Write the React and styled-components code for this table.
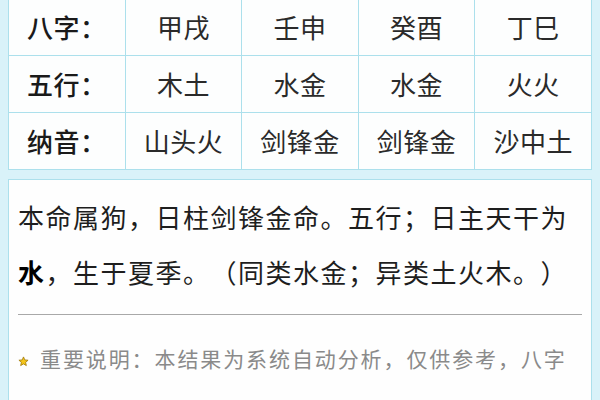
import React from 'react';
import styled, { createGlobalStyle } from 'styled-components';

const GlobalStyle = createGlobalStyle`
  html, body {
    margin: 0;
    padding: 0;
    background: #d9f2f9;
    font-family: "Noto Sans CJK SC", "Noto Sans", sans-serif;
  }
`;

const Page = styled.div`
  width: 600px;
  height: 400px;
  overflow: hidden;
  padding: 0 8px;
  box-sizing: border-box;
  background: #d9f2f9;
`;

const Table = styled.table`
  width: 584px;
  margin-top: -2px;
  border-collapse: collapse;
  table-layout: fixed;
  background: #fdfefe;
`;

const Cell = styled.td`
  height: 56px;
  padding: 0;
  border: 1px solid #ace0ec;
  text-align: center;
  font-size: 26px;
  letter-spacing: 0.5px;
  line-height: 56px;
  color: ${p => (p.label ? '#1a1a1a' : '#2a2a2a')};
  font-weight: ${p => (p.label ? 500 : 400)};
`;

const Card = styled.div`
  margin-top: 9px;
  background: #fefefe;
  border: 1px solid #ace0ec;
  padding: 9px 9px 0;
  height: 300px;
`;

const Summary = styled.p`
  margin: 0;
  font-size: 26px;
  letter-spacing: 1.5px;
  line-height: 55px;
  color: #1e1e1e;
  text-spacing-trim: space-all;

  b {
    font-weight: 700;
    color: #000;
  }
`;

const Divider = styled.hr`
  margin: 15px 0 0;
  border: none;
  border-top: 1px solid #a8a8a8;
`;

const Notice = styled.p`
  margin: 15px 0 0;
  font-size: 21px;
  letter-spacing: 1.9px;
  line-height: 56px;
  color: #8a8a8a;
`;

const Star = styled.svg`
  width: 11px;
  height: 11px;
  margin-right: 11px;
  vertical-align: 0;
`;

const rows = [
  ['八字：', '甲戌', '壬申', '癸酉', '丁巳'],
  ['五行：', '木土', '水金', '水金', '火火'],
  ['纳音：', '山头火', '剑锋金', '剑锋金', '沙中土'],
];

const App = () => (
  <Page>
    <GlobalStyle />
    <Table>
      <tbody>
        {rows.map(row => (
          <tr key={row[0]}>
            {row.map((text, i) => (
              <Cell key={i} label={i === 0}>{text}</Cell>
            ))}
          </tr>
        ))}
      </tbody>
    </Table>
    <Card>
      <Summary>
        本命属狗，日柱剑锋金命。五行；日主天干为<b>水</b>，生于夏季。（同类水金；异类土火木。）
      </Summary>
      <Divider />
      <Notice>
        <Star viewBox="0 0 24 24">
          <path
            d="M12 2l2.9 6.6 7.1.6-5.4 4.7 1.6 7-6.2-3.7-6.2 3.7 1.6-7L2 9.2l7.1-.6z"
            fill="#f5c518"
            stroke="#a07a08"
            strokeWidth="1.8"
            strokeLinejoin="round"
          />
        </Star>
        重要说明：本结果为系统自动分析，仅供参考，八字排盘结果请以专业人士解读为准。
      </Notice>
    </Card>
  </Page>
);

export default App;
